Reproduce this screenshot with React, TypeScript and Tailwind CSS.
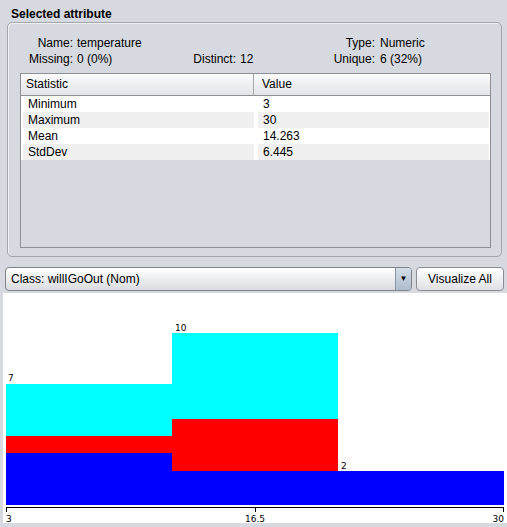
const font = { fontFamily: '"Liberation Sans", Arial, sans-serif' };

const stats = [
  { label: "Minimum", value: "3" },
  { label: "Maximum", value: "30" },
  { label: "Mean", value: "14.263" },
  { label: "StdDev", value: "6.445" },
];

function Histogram() {
  return (
    <svg width="504" height="230" viewBox="0 0 504 230" className="block">
      <rect x="3" y="91" width="166" height="52" fill="#00ffff" />
      <rect x="3" y="143" width="166" height="17" fill="#ff0000" />
      <rect x="3" y="160" width="166" height="52" fill="#0000ff" />
      <rect x="169" y="40" width="166" height="86" fill="#00ffff" />
      <rect x="169" y="126" width="166" height="52" fill="#ff0000" />
      <rect x="169" y="178" width="166" height="34" fill="#0000ff" />
      <rect x="335" y="178" width="166" height="34" fill="#0000ff" />
      <g fontFamily="'DejaVu Sans', 'Liberation Sans', sans-serif" fontSize="9" fill="#000">
        <text x="5" y="88">7</text>
        <text x="172" y="38">10</text>
        <text x="338" y="176">2</text>
        <text x="3" y="229">3</text>
        <text x="252" y="229" textAnchor="middle">16.5</text>
        <text x="501" y="229" textAnchor="end">30</text>
      </g>
      <line x1="3" y1="214.5" x2="501" y2="214.5" stroke="#000" strokeWidth="1" />
      <line x1="3.5" y1="214" x2="3.5" y2="219" stroke="#000" />
      <line x1="252.5" y1="214" x2="252.5" y2="219" stroke="#000" />
      <line x1="500.5" y1="214" x2="500.5" y2="219" stroke="#000" />
    </svg>
  );
}

export default function App() {
  return (
    <div className="relative h-[527px] w-[507px] overflow-hidden bg-[#d6d9df] text-[12px] text-black" style={font}>
      <div className="h-[22px] pl-[11px] pt-[7px] text-[12px] font-bold leading-[15px]">Selected attribute</div>

      <div className="ml-[7px] h-[235px] w-[495px] rounded-[5px] border border-[#a3a6ad] shadow-[inset_1px_1px_0_#eef0f3]">
        <div className="grid grid-cols-[65px_103px_60px_79px_60px_1fr] pt-[12px] leading-[16px]">
          <span className="text-right">Name:</span>
          <span className="pl-[4px]">temperature</span>
          <span />
          <span />
          <span className="text-right">Type:</span>
          <span className="pl-[5px]">Numeric</span>
          <span className="text-right">Missing:</span>
          <span className="pl-[4px]">0 (0%)</span>
          <span className="text-right">Distinct:</span>
          <span className="pl-[4px]">12</span>
          <span className="text-right">Unique:</span>
          <span className="pl-[5px]">6 (32%)</span>
        </div>

        <div className="ml-[12px] mt-[6px] flex h-[175px] w-[471px] flex-col border border-[#8c8f96] bg-[#d6d9df]">
          <div className="flex h-[22px] shrink-0 border-b border-[#8c8f96] bg-gradient-to-b from-[#fbfbfc] to-[#e3e4e8] leading-[21px]">
            <div className="w-[233px] border-r border-[#a5a8ae] pl-[5px]">Statistic</div>
            <div className="pl-[8px]">Value</div>
          </div>
          {stats.map((s, i) => (
            <div key={s.label} className="flex h-[16px] bg-white leading-[16px]">
              <div className={`ml-[2px] w-[231px] pl-[5px] ${i % 2 ? "bg-[#f0f0f0]" : ""}`}>{s.label}</div>
              <div className={`ml-[4px] w-[231px] pl-[5px] ${i % 2 ? "bg-[#f0f0f0]" : ""}`}>{s.value}</div>
            </div>
          ))}
        </div>
      </div>

      <div className="mt-[10px] flex h-[24px] gap-[4px] pl-[5px]">
        <div className="flex w-[407px] rounded-[4px] border border-[#7f838a] bg-gradient-to-b from-[#ffffff] to-[#dadce1]">
          <div className="flex-1 pl-[5px] leading-[22px]">Class: willIGoOut (Nom)</div>
          <div className="flex w-[16px] items-center justify-center rounded-r-[3px] border-l border-[#8a96a6] bg-gradient-to-b from-[#d3dde8] to-[#aebccc] text-[8px] leading-none">
            ▼
          </div>
        </div>
        <div className="flex w-[88px] items-center justify-center rounded-[4px] border border-[#8a8d94] bg-gradient-to-b from-[#ffffff] to-[#dfe1e5]">
          Visualize All
        </div>
      </div>

      <div className="ml-[3px] mt-[2px] h-[230px] w-[504px] bg-white">
        <Histogram />
      </div>
    </div>
  );
}
